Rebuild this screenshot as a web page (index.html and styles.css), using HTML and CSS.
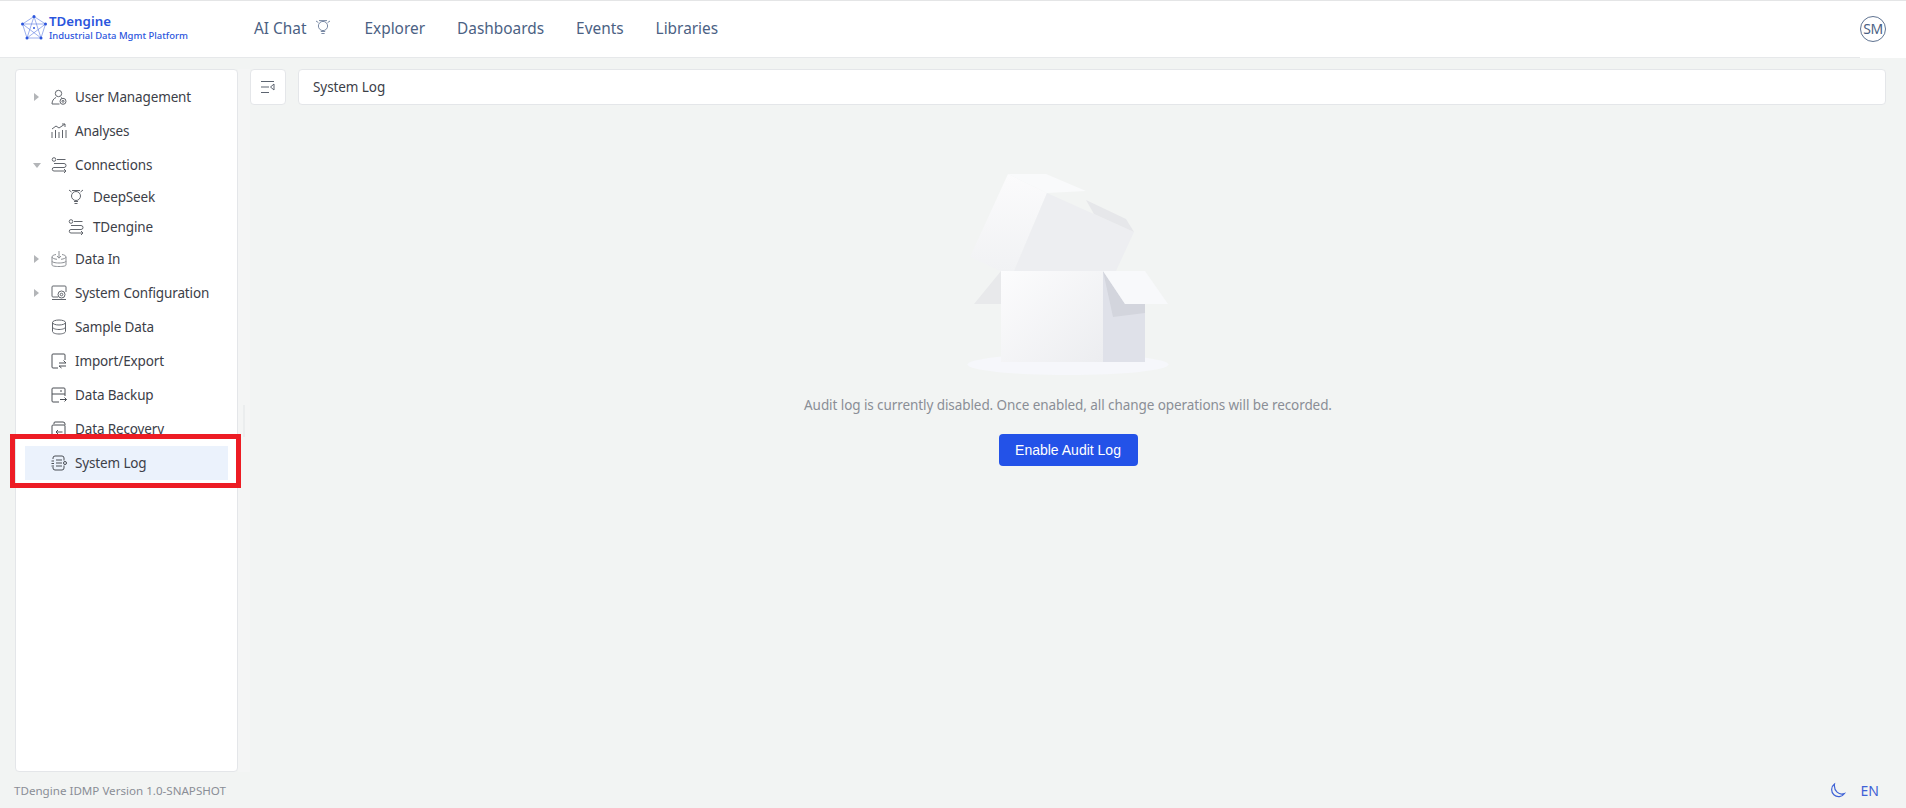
FILE: index.html
```html
<!DOCTYPE html>
<html lang="en">
<head>
<meta charset="utf-8">
<title>TDengine IDMP</title>
<link rel="stylesheet" href="styles.css">
</head>
<body>
<header class="topbar">
  <div class="brand">
    <svg class="logo" viewBox="0 0 28 28" width="28" height="28">
      <g fill="none" stroke="#5a7be0" stroke-width=".6">
        <path d="M14 2.500 25.500 10 21 24H7L2.500 10Z"/>
        <path d="M14 2.500 7 24M14 2.500 21 24M2.500 10 21 24M25.500 10 7 24M2.500 10H25.500"/>
      </g>
      <g fill="#2b55dd">
        <circle cx="14" cy="2.500" r="1.500"/><circle cx="25.500" cy="10" r="1.500"/><circle cx="21" cy="24" r="1.500"/><circle cx="7" cy="24" r="1.500"/><circle cx="2.500" cy="10" r="1.500"/><circle cx="14" cy="14" r="1"/>
      </g>
    </svg>
    <div class="brand-text">
      <div class="brand-name">TDengine</div>
      <div class="brand-sub">Industrial Data Mgmt Platform</div>
    </div>
  </div>
  <nav class="nav">
    <a class="nav-item nav-ai">AI Chat
      <svg viewBox="0 0 18 18" width="18" height="18" class="nav-icon"><g fill="none" stroke="#7a8aa5" stroke-width="1"><circle cx="9" cy="8" r="4.600"/><path d="M6.800 13.500h4.400M7.400 15.500h3.200M2 3l2.400 1.600M16 3l-2.400 1.600M5 2.600h8"/></g></svg>
    </a>
    <a class="nav-item">Explorer</a>
    <a class="nav-item">Dashboards</a>
    <a class="nav-item">Events</a>
    <a class="nav-item">Libraries</a>
  </nav>
  <div class="avatar">SM</div>
</header>

<div class="body">
  <aside class="sidebar">
    <ul class="tree">
      <li class="row"><span class="arrow"></span>
        <svg class="ico" viewBox="0 0 16 16"><circle cx="7.500" cy="4.500" r="3.200"/><path d="M5 8.500C2.500 9.500 1 12 1 15h7.500M10 8.500l1 .7"/><circle cx="12" cy="12.300" r="3"/><circle cx="12" cy="12.300" r="1"/></svg>
        <span>User Management</span></li>
      <li class="row"><span class="noarrow"></span>
        <svg class="ico" viewBox="0 0 16 16"><path d="M1 15V9M4.500 15V7M8 15V9M11.500 15V7M15 15V7M1 6l4-3 3 2 6-4M11 1h3v3"/></svg>
        <span>Analyses</span></li>
      <li class="row"><span class="arrow arrow-open"></span>
        <svg class="ico" viewBox="0 0 16 16"><circle cx="3" cy="2.500" r="1.800"/><path d="M6 2.500h8.500M3 6.500h10a1.500 1.500 0 0 1 0 4H3a1.500 1.500 0 0 0 0 3.500h12M13 12l2 2-2 2"/></svg>
        <span>Connections</span></li>
      <li class="row sub">
        <svg class="ico" viewBox="0 0 16 16"><path d="M1 1l2.500 2M15 1l-2.500 2M4 1.500h8"/><circle cx="8" cy="7" r="4.500"/><path d="M6 12.500h4M6.500 14.500h3"/></svg>
        <span>DeepSeek</span></li>
      <li class="row sub">
        <svg class="ico" viewBox="0 0 16 16"><circle cx="3" cy="2.500" r="1.800"/><path d="M6 2.500h8.500M3 6.500h10a1.500 1.500 0 0 1 0 4H3a1.500 1.500 0 0 0 0 3.500h12M13 12l2 2-2 2"/></svg>
        <span>TDengine</span></li>
      <li class="row"><span class="arrow"></span>
        <svg class="ico ico-light" viewBox="0 0 16 16"><path d="M5 3.500C2.500 4 1 4.700 1 6v8c0 1 3 1.500 7 1.500s7-.5 7-1.500V6c0-1.300-1.500-2-4-2.500M1 6c0 1 2 2 5 2.300M15 6c0 1-2 2-5 2.300M1 10c0 1.200 3 2 7 2s7-.8 7-2M8 0v7M6 5l2 2.200L10 5"/></svg>
        <span>Data In</span></li>
      <li class="row"><span class="arrow"></span>
        <svg class="ico" viewBox="0 0 16 16"><path d="M7 12H2a1 1 0 0 1-1-1V2a1 1 0 0 1 1-1h12a1 1 0 0 1 1 1v5M1 14.500h14"/><circle cx="10.500" cy="9.500" r="3.500"/><circle cx="10.500" cy="9.500" r="1.300"/></svg>
        <span>System Configuration</span></li>
      <li class="row"><span class="noarrow"></span>
        <svg class="ico" viewBox="0 0 16 16"><ellipse cx="8" cy="3.500" rx="6.500" ry="2.500"/><path d="M1.500 3.500v9c0 1.400 3 2.500 6.500 2.500s6.500-1.100 6.500-2.500v-9M1.500 8c0 1.400 3 2.500 6.500 2.500s6.500-1.100 6.500-2.500"/></svg>
        <span>Sample Data</span></li>
      <li class="row"><span class="noarrow"></span>
        <svg class="ico ico-dark" viewBox="0 0 16 16"><path d="M7 15H2a1 1 0 0 1-1-1V2a1 1 0 0 1 1-1h11a1 1 0 0 1 1 1v5M8 10h7l-2.500-2.500M15 13H8l2.500 2"/></svg>
        <span>Import/Export</span></li>
      <li class="row"><span class="noarrow"></span>
        <svg class="ico ico-dark" viewBox="0 0 16 16"><path d="M8 15H2a1 1 0 0 1-1-1V2a1 1 0 0 1 1-1h11a1 1 0 0 1 1 1v7M1 7h13M10 3v2M9 12.500h6.500M13.500 10.500l2 2-2 2"/></svg>
        <span>Data Backup</span></li>
      <li class="row"><span class="noarrow"></span>
        <svg class="ico ico-dark" viewBox="0 0 16 16"><path d="M3 3V2a1 1 0 0 1 1-1h8a2 2 0 0 1 2 2v1M2 4h11a1 1 0 0 1 1 1v9a1 1 0 0 1-1 1H2a1 1 0 0 1-1-1V5a1 1 0 0 1 1-1ZM11.500 11H5M7 9 5 11l2 2"/></svg>
        <span>Data Recovery</span></li>
      <li class="row active"><span class="noarrow"></span>
        <svg class="ico ico-dark" viewBox="0 0 16 16"><path d="M13 5.500V3a2 2 0 0 0-2-2H4a2 2 0 0 0-2 2v1M13 10.500V13a2 2 0 0 1-2 2H4a2 2 0 0 1-2-2v-1M.5 6h2.500M.5 8.500h2.500M.5 11h2.500M5 5h6M5 8h6M5 11h6"/><circle cx="14" cy="8" r="1.500"/></svg>
        <span>System Log</span></li>
    </ul>
  </aside>
  <div class="splitter"></div>
  <main class="content">
    <div class="toolbar">
      <button class="collapse" type="button">
        <svg viewBox="0 0 14 14" width="14" height="14"><path d="M0 1.500h13M0 7h8M0 12.500h8M13 4 9.500 7l3.500 3Z" fill="none" stroke="#5c6470" stroke-width="1"/></svg>
      </button>
      <div class="title">System Log</div>
    </div>
    <div class="empty">
      <svg class="box" viewBox="0 0 202 202" width="202" height="202">
        <defs>
          <linearGradient id="g1" x1="0" y1="0" x2="1" y2="1"><stop offset="0" stop-color="#fcfcfd"/><stop offset="1" stop-color="#ecedf0"/></linearGradient>
          <linearGradient id="g2" x1="0" y1="0" x2="0" y2="1"><stop offset="0" stop-color="#fbfbfc"/><stop offset="1" stop-color="#f1f2f4"/></linearGradient>
        </defs>
        <ellipse cx="101" cy="191.500" rx="100.500" ry="10.500" fill="#f6f7fb"/>
        <path d="M34 98 7 131H34Z" fill="#e8e9eb"/>
        <path d="M41 1 3 84l30 14h14L80 20Z" fill="url(#g2)"/>
        <path d="M80 20 47 98H149L167 59Z" fill="#edeef1"/>
        <path d="M41 1H79l40 17-39 2Z" fill="#f9fafb"/>
        <path d="M119 27 159 46l8 13-40-18Z" fill="#e6e7ea"/>
        <path d="M34 98H136V189H34Z" fill="url(#g1)"/>
        <path d="M136 98H178V189H136Z" fill="#dfe1e9"/>
        <path d="M136 98 146 144 178 140V131H158Z" fill="#d3d5dd"/>
        <path d="M136 98H178L201 131H158Z" fill="#f8f9fb"/>
      </svg>
      <p class="msg">Audit log is currently disabled. Once enabled, all change operations will be recorded.</p>
      <button class="primary" type="button">Enable Audit Log</button>
    </div>
  </main>
</div>

<footer class="footer">
  <span class="version">TDengine IDMP Version 1.0-SNAPSHOT</span>
  <div class="footer-right">
    <svg class="moon" viewBox="0 0 18 18" width="18" height="18"><path d="M6.500 2a7 7 0 1 0 10 9.500C11 13.500 5.500 9 6.500 2Z" fill="none" stroke="#3f62d6" stroke-width="1.200"/></svg>
    <span class="lang">EN</span>
  </div>
</footer>

<div class="highlight"></div>
</body>
</html>
```
FILE: styles.css
```css
* { box-sizing: border-box; }
html, body { margin: 0; height: 100%; }
body {
  width: 1906px;
  height: 808px;
  overflow: hidden;
  display: flex;
  flex-direction: column;
  position: relative;
  background: #f2f4f3;
  font-family: "Noto Sans", "Liberation Sans", sans-serif;
  font-size: 13.500px;
  letter-spacing: -.08px;
  color: #3c4048;
}
.topbar {
  height: 58px;
  flex: none;
  display: flex;
  align-items: center;
  background: #fff;
  border-top: 1px solid #e4e5e6;
  position: relative;
  padding-left: 20px;
  padding-right: 20px;
}
.topbar::after {
  content: "";
  position: absolute;
  left: 0;
  right: 46px;
  bottom: 0;
  height: 1px;
  background: #e6e8ea;
}
.brand { display: flex; align-items: center; gap: 1px; width: 234px; margin-top: -3px; }
.logo { flex: none; }
.brand-name { font-size: 13.300px; line-height: 15px; font-weight: 600; color: #2b55dd; letter-spacing: 0; }
.brand-sub { font-size: 9.450px; line-height: 14px; font-weight: 500; color: #2b55dd; white-space: nowrap; letter-spacing: 0; }
.nav { display: flex; gap: 32px; margin-top: -2px; }
.nav-item { font-size: 15.400px; color: #4b6183; display: flex; align-items: center; letter-spacing: 0; }
.nav-ai { gap: 8px; }
.nav-icon { margin-top: -3px; }
.avatar {
  margin-left: auto;
  width: 26px;
  height: 26px;
  margin-top: -1px;
  border: 1px solid #5f7391;
  border-radius: 50%;
  font-size: 14px;
  line-height: 24px;
  text-align: center;
  color: #4b6183;
  letter-spacing: -.4px;
}
.body {
  flex: 1;
  min-height: 0;
  display: flex;
  padding: 11px 20px 0 15px;
}
.sidebar {
  width: 223px;
  flex: none;
  background: #fff;
  border: 1px solid #e4e6e9;
  border-radius: 4px;
  padding: 10px 9px;
}
.tree { list-style: none; margin: 0; padding: 0; letter-spacing: -.14px; }
.row {
  height: 34px;
  display: flex;
  align-items: center;
  padding-left: 9px;
  color: #3c4048;
  white-space: nowrap;
}
.row.sub { height: 30px; padding-left: 43px; }
.row.sub .ico { margin-right: 9px; }
.row.active { background: #ebf2fc; }
.arrow, .noarrow { width: 6px; height: 10px; flex: none; margin-right: 11px; }
.arrow {
  border-left: 5px solid #b3b5b8;
  border-top: 4px solid transparent;
  border-bottom: 4px solid transparent;
  height: 8px;
}
.arrow-open {
  width: 8px;
  margin-left: -1px;
  margin-right: 10px;
  height: 5px;
  border-left: 4px solid transparent;
  border-right: 4px solid transparent;
  border-top: 5px solid #b3b5b8;
  border-bottom: 0;
}
.ico {
  width: 16px;
  height: 16px;
  flex: none;
  margin-right: 8px;
  fill: none;
  stroke: #62666d;
  stroke-width: 1;
}
.ico-light { stroke: #8d9095; }
.ico-dark { stroke: #4a4e55; }
.splitter {
  width: 12px;
  flex: none;
  display: flex;
  justify-content: center;
  background: #f4f5f5;
}
.splitter::before {
  content: "";
  width: 2px;
  height: 32px;
  margin-top: 336px;
  background: #ebedee;
}
.content { flex: 1; min-width: 0; display: flex; flex-direction: column; }
.toolbar { display: flex; gap: 12px; height: 36px; flex: none; }
.collapse {
  width: 36px;
  height: 36px;
  padding: 0;
  display: flex;
  align-items: center;
  justify-content: center;
  background: #fff;
  border: 1px solid #e4e6e9;
  border-radius: 4px;
}
.title {
  flex: 1;
  background: #fff;
  border: 1px solid #e4e6e9;
  border-radius: 4px;
  padding-left: 14px;
  line-height: 34px;
  color: #3c4048;
}
.empty {
  display: flex;
  flex-direction: column;
  align-items: center;
  padding-top: 68px;
}
.box { display: block; }
.msg { margin: 20px 0 0; line-height: 20px; color: #8a8e96; }
.primary {
  margin-top: 19px;
  height: 32px;
  width: 139px;
  border: 0;
  border-radius: 4px;
  background: #2352e8;
  color: #fff;
  font-family: "Liberation Sans", sans-serif;
  font-size: 14px;
  letter-spacing: 0;
}
.footer {
  height: 36px;
  flex: none;
  display: flex;
  align-items: center;
  justify-content: space-between;
  padding: 0 27px 0 14px;
}
.version { font-size: 11.600px; color: #8a8e96; letter-spacing: 0; }
.footer-right { display: flex; align-items: center; gap: 15px; }
.moon { margin-top: 2px; }
.lang { font-size: 14px; color: #3f62d6; letter-spacing: 0; }
.highlight {
  position: absolute;
  left: 10px;
  top: 434px;
  width: 231px;
  height: 54px;
  border: 5px solid #ed1c24;
  pointer-events: none;
}
```
